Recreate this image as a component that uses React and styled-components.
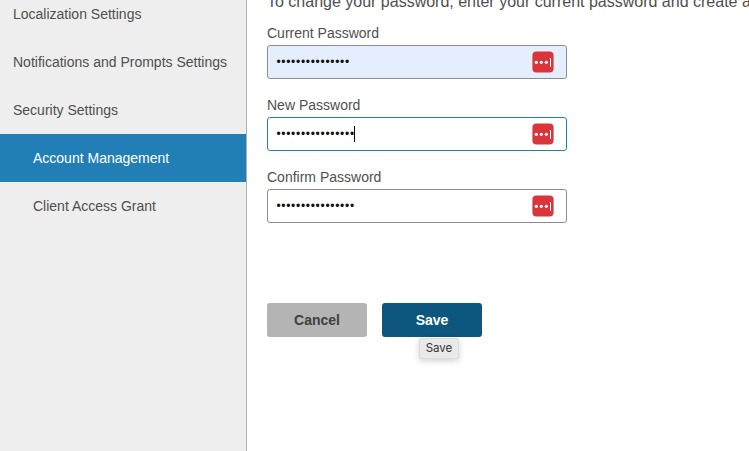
import React from "react";
import styled, { createGlobalStyle } from "styled-components";

const GlobalStyle = createGlobalStyle`
  *, *::before, *::after { box-sizing: border-box; }
  body {
    margin: 0;
    background: #fff;
    color: #4f4f4f;
    font-family: "Liberation Sans", Helvetica, Arial, sans-serif;
    font-size: 14px;
    overflow: hidden;
  }
`;

const Page = styled.div`
  display: flex;
  height: 100vh;
  overflow: hidden;
`;

const Sidebar = styled.nav`
  flex: 0 0 247px;
  background: #eee;
  border-right: 1px solid #b0b0b0;
`;

const NavList = styled.ul`
  list-style: none;
  margin: -10px 0 0;
  padding: 0;
`;

const NavItem = styled.li`
  display: flex;
  align-items: center;
  height: 48px;
  padding-left: ${({ $nested }) => ($nested ? 33 : 13)}px;
  white-space: nowrap;
  background: ${({ $active }) => ($active ? "#227fb5" : "transparent")};
  color: ${({ $active }) => ($active ? "#fff" : "#4f4f4f")};
`;

const Content = styled.main`
  flex: 1;
  min-width: 0;
  padding-left: 20px;
`;

const Intro = styled.p`
  margin: -8px 0 0;
  height: 32px;
  font-size: 16px;
  line-height: 20px;
  white-space: nowrap;
`;

const Form = styled.form`
  display: flex;
  flex-direction: column;
  width: 300px;
`;

const Field = styled.div`
  height: 72px;
`;

const Label = styled.label`
  display: block;
  height: 21px;
  line-height: 18px;
`;

const InputBox = styled.div`
  display: flex;
  align-items: center;
  justify-content: space-between;
  height: 34px;
  padding: 0 12px 0 8.4px;
  border: 1px solid ${({ $focused }) => ($focused ? "#227fb5" : "#8c8c8c")};
  border-radius: 3px;
  background: ${({ $filled }) => ($filled ? "#e5eefc" : "#fff")};
  color: #111;
`;

const Value = styled.span`
  display: flex;
  align-items: center;
  height: 16px;
  font-size: 12px;
  letter-spacing: 0.7px;
  line-height: 16px;
`;

const Caret = styled.span`
  width: 1px;
  height: 16px;
  margin-left: -0.6px;
  background: #000;
`;

const Actions = styled.div`
  display: flex;
  gap: 15px;
  width: 215px;
  margin-top: 63px;
`;

const Button = styled.button`
  width: 100px;
  height: 34px;
  padding: 0;
  border: 0;
  border-radius: 3px;
  font: bold 14px "Liberation Sans", Helvetica, Arial, sans-serif;
  background: ${({ $primary }) => ($primary ? "#0d567d" : "#b4b4b4")};
  color: ${({ $primary }) => ($primary ? "#fff" : "#404040")};
`;

const ButtonAnchor = styled.div`
  position: relative;
`;

const Tooltip = styled.span`
  position: absolute;
  top: 35px;
  left: 37px;
  width: 40px;
  height: 21px;
  border: 1px solid #dcdcdc;
  border-radius: 2px;
  background: #e9e9e9;
  box-shadow: 0 2px 6px rgba(0, 0, 0, 0.18);
  color: #333;
  font: 11.5px/19px Inter, "Liberation Sans", sans-serif;
  text-align: center;
`;

const ManagerIcon = () => (
  <svg width="22" height="22" viewBox="0 0 22 22" aria-hidden="true">
    <rect x="0.4" y="0.5" width="21.2" height="21" rx="4" fill="#da353a" />
    <circle cx="4.3" cy="11.3" r="1.6" fill="#fff" />
    <circle cx="9.3" cy="11.3" r="1.6" fill="#fff" />
    <circle cx="14.3" cy="11.3" r="1.6" fill="#fff" />
    <rect x="18" y="7" width="1" height="9" fill="#fff" />
  </svg>
);

const navItems = [
  { label: "Localization Settings" },
  { label: "Notifications and Prompts Settings" },
  { label: "Security Settings" },
  { label: "Account Management", nested: true, active: true },
  { label: "Client Access Grant", nested: true },
];

const fields = [
  { label: "Current Password", length: 15, filled: true },
  { label: "New Password", length: 16, focused: true },
  { label: "Confirm Password", length: 16 },
];

export default function App() {
  return (
    <>
      <GlobalStyle />
      <Page>
        <Sidebar>
          <NavList>
            {navItems.map(({ label, nested, active }) => (
              <NavItem key={label} $nested={nested} $active={active}>
                {label}
              </NavItem>
            ))}
          </NavList>
        </Sidebar>
        <Content>
          <Intro>To change your password, enter your current password and create a</Intro>
          <Form>
            {fields.map(({ label, length, filled, focused }) => (
              <Field key={label}>
                <Label>{label}</Label>
                <InputBox $filled={filled} $focused={focused}>
                  <Value>
                    {"•".repeat(length)}
                    {focused && <Caret />}
                  </Value>
                  <ManagerIcon />
                </InputBox>
              </Field>
            ))}
            <Actions>
              <Button type="button">Cancel</Button>
              <ButtonAnchor>
                <Button type="button" $primary>Save</Button>
                <Tooltip role="tooltip">Save</Tooltip>
              </ButtonAnchor>
            </Actions>
          </Form>
        </Content>
      </Page>
    </>
  );
}
